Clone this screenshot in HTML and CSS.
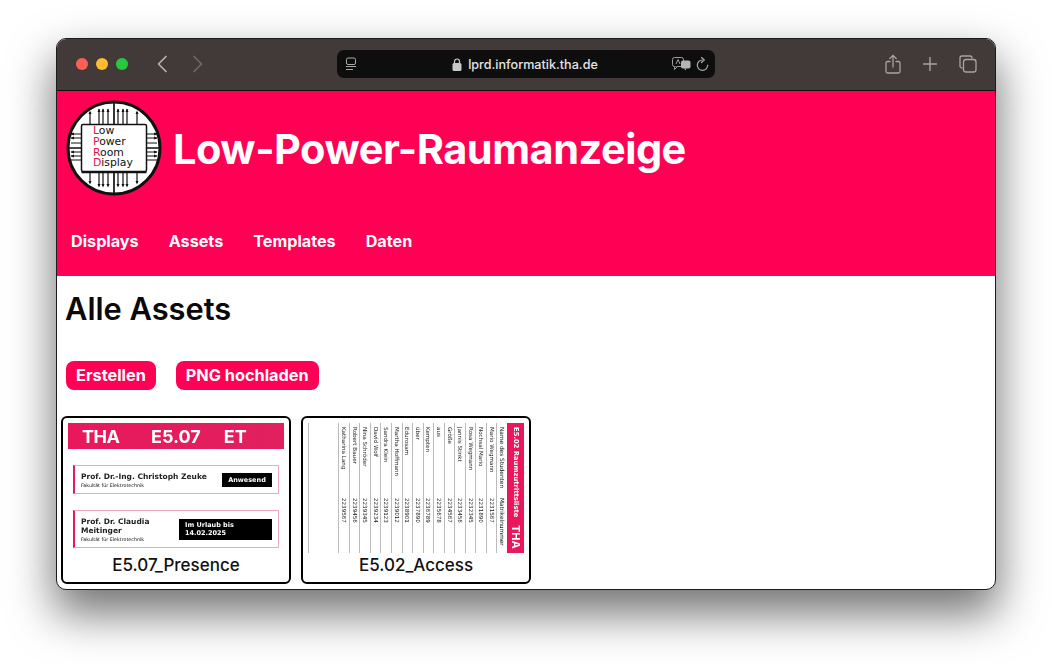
FILE: index.html
```html
<!DOCTYPE html>
<html>
<head>
  <title>Low-Power-Raumanzeige</title>
  <link rel="stylesheet" href="styles.css">
</head>
<body>
<div class="window">
  <div class="toolbar">
    <div class="lights">
      <span class="light red"></span>
      <span class="light yellow"></span>
      <span class="light green"></span>
    </div>
    <div class="arrows">
      <svg width="12" height="18" viewBox="0 0 12 18"><path d="M10 1.5 2.5 9l7.500 7.500" fill="none" stroke="#b5b1b0" stroke-width="1.700" stroke-linecap="round" stroke-linejoin="round"/></svg>
      <svg width="12" height="18" viewBox="0 0 12 18"><path d="M2 1.500 9.500 9 2 16.500" fill="none" stroke="#6e6867" stroke-width="1.700" stroke-linecap="round" stroke-linejoin="round"/></svg>
    </div>
    <div class="urlbar">
      <svg class="reader" width="13" height="14" viewBox="0 0 13 14"><rect x="1.500" y="1" width="9" height="6.500" rx="1.500" fill="none" stroke="#a9a9a9" stroke-width="1"/><path d="M1 9.500h10M1 12.500h7" stroke="#a9a9a9" stroke-width="1"/></svg>
      <div class="address">
        <svg width="10" height="13" viewBox="0 0 10 13"><rect x="0.500" y="5" width="9" height="8" rx="1.500" fill="#c8c8c8"/><path d="M2.500 5.500V3.500a2.500 2.500 0 0 1 5 0v2" fill="none" stroke="#c8c8c8" stroke-width="1.200"/></svg>
        <span>lprd.informatik.tha.de</span>
      </div>
      <svg class="translate" width="19" height="14" viewBox="0 0 19 14"><rect x="0.500" y="0.500" width="11" height="9" rx="2" fill="#0e0e0e" stroke="#a0a0a0"/><path d="M2.500 9.500v3l3-3" fill="#0e0e0e" stroke="#a0a0a0"/><rect x="9" y="3.500" width="9.500" height="8" rx="2" fill="#b5b5b5"/><path d="M14 11.500v2l-2-2" fill="#b5b5b5"/><path d="M4 7l2-4.500L8 7" fill="none" stroke="#a0a0a0"/></svg>
      <svg width="13" height="15" viewBox="0 0 13 15"><path d="M6.500 3a5.200 5.200 0 1 0 5.200 5.200" fill="none" stroke="#a9a9a9" stroke-width="1.200" stroke-linecap="round"/><path d="M5.500 0.500 8.300 3 5.500 5.500" fill="none" stroke="#a9a9a9" stroke-width="1.200" stroke-linecap="round"/></svg>
    </div>
    <div class="actions">
      <svg width="16" height="20" viewBox="0 0 16 20"><path d="M5 7.500H2.500a1.500 1.500 0 0 0-1.500 1.500v8.500a1.500 1.500 0 0 0 1.500 1.500h11a1.500 1.500 0 0 0 1.500-1.500V9a1.500 1.500 0 0 0-1.500-1.500H11M8 13V1.500M4.800 4.500 8 1.300l3.200 3.200" fill="none" stroke="#a8a4a3" stroke-width="1.300" stroke-linecap="round"/></svg>
      <svg width="14" height="14" viewBox="0 0 14 14"><path d="M7 .5v13M.5 7h13" stroke="#a8a4a3" stroke-width="1.400" stroke-linecap="round"/></svg>
      <svg width="18" height="18" viewBox="0 0 18 18"><path d="M3.500 13H3a2 2 0 0 1-2-2V3a2 2 0 0 1 2-2h8a2 2 0 0 1 2 2v.500" fill="none" stroke="#a8a4a3" stroke-width="1.300"/><rect x="4.500" y="4.500" width="12.500" height="12.500" rx="2.500" fill="none" stroke="#a8a4a3" stroke-width="1.300"/></svg>
    </div>
  </div>

  <header class="hero">
    <div class="brand">
      <svg class="logo" width="96" height="96" viewBox="0 0 96 96">
        <circle cx="48" cy="48" r="46" fill="#fff" stroke="#111" stroke-width="3"/>
        <path d="M48 2v22M48 72v22M2 48h14M80 48h14" stroke="#111" stroke-width="1.700"/>
        <path d="M24 24V12M33 24V9M37 24V9M42 24V9M52 24V9M57 24V9M61 24V9M71 24V12" stroke="#111" stroke-width="1.200"/>
        <path d="M22.500 14 24 10.500 25.500 14zM31.500 12 33 8.500 34.500 12zM35.500 12 37 8.500 38.500 12zM40.500 12 42 8.500 43.500 12zM50.500 12 52 8.500 53.500 12zM55.500 12 57 8.500 58.500 12zM59.500 12 61 8.500 62.500 12zM69.500 14 71 10.500 72.500 14z" fill="#111"/>
        <path d="M24 72v11M33 72v14M37 72v14M42 72v14M52 72v14M57 72v14M61 72v14M71 72v11" stroke="#111" stroke-width="1.200"/>
        <path d="M22.500 81 24 84.500 25.500 81zM31.500 84 33 87.500 34.500 84zM35.500 84 37 87.500 38.500 84zM40.500 84 42 87.500 43.500 84zM50.500 84 52 87.500 53.500 84zM55.500 84 57 87.500 58.500 84zM59.500 84 61 87.500 62.500 84zM69.500 81 71 84.500 72.500 81z" fill="#111"/>
        <path d="M5 34h11M5 38h11M5 43h11M5 52h11M5 56h11M5 60h11M80 34h11M80 38h11M80 43h11M80 52h11M80 56h11M80 60h11" stroke="#111" stroke-width="1.200"/>
        <path d="M8 32.500 4.500 34 8 35.500zM8 36.500 4.500 38 8 39.500zM8 50.500 4.500 52 8 53.500zM8 54.500 4.500 56 8 57.500zM88 32.500 91.500 34 88 35.500zM88 36.500 91.500 38 88 39.500zM88 50.500 91.500 52 88 53.500zM88 54.500 91.500 56 88 57.500z" fill="#111"/>
        <rect x="15.500" y="24.500" width="65" height="47" rx="1.500" fill="#fff" stroke="#111" stroke-width="1.500"/>
        <path d="M15.500 72.500h65" stroke="#111" stroke-width="1.500"/>
        <g class="logo-text">
          <text x="27" y="34"><tspan class="logo-red">L</tspan>ow</text>
          <text x="27" y="45"><tspan class="logo-red">P</tspan>ower</text>
          <text x="27" y="55.500"><tspan class="logo-red">R</tspan>oom</text>
          <text x="27" y="66"><tspan class="logo-red">D</tspan>isplay</text>
        </g>
      </svg>
      <h1 class="site-title">Low-Power-Raumanzeige</h1>
    </div>
    <nav class="nav">
      <a href="#">Displays</a>
      <a href="#">Assets</a>
      <a href="#">Templates</a>
      <a href="#">Daten</a>
    </nav>
  </header>

  <main class="content">
    <h2 class="page-title">Alle Assets</h2>
    <div class="buttons">
      <a class="btn" href="#">Erstellen</a>
      <a class="btn" href="#">PNG hochladen</a>
    </div>
    <div class="assets">
      <div class="card">
        <div class="thumb">
          <div class="door-band">
            <span class="door-logo">THA</span>
            <span>E5.07</span>
            <span>ET</span>
          </div>
          <div class="person">
            <div class="person-text">
              <div class="person-name">Prof. Dr.-Ing. Christoph Zeuke</div>
              <div class="person-dept">Fakultät für Elektrotechnik</div>
            </div>
            <div class="status status-short">Anwesend</div>
          </div>
          <div class="person person-tall">
            <div class="person-text">
              <div class="person-name">Prof. Dr. Claudia Meitinger</div>
              <div class="person-dept">Fakultät für Elektrotechnik</div>
            </div>
            <div class="status status-long">Im Urlaub bis 14.02.2025</div>
          </div>
        </div>
        <div class="card-name">E5.07_Presence</div>
      </div>

      <div class="card">
        <div class="thumb">
          <div class="list">
            <div class="list-band">
              <span>E5.02 Raumzutrittsliste</span>
              <span class="list-logo">THA</span>
            </div>
            <div class="list-row list-head"><span>Name des Studenten</span><span>Matrikelnummer</span></div>
            <div class="list-row"><span>Mario Wegmann</span><span>2231567</span></div>
            <div class="list-row"><span>Nochsal Mario</span><span>2231890</span></div>
            <div class="list-row"><span>Rosa Wegmann</span><span>2232345</span></div>
            <div class="list-row"><span>Jannis Stinkt</span><span>2233456</span></div>
            <div class="list-row"><span>Größe</span><span>2234567</span></div>
            <div class="list-row"><span>aus</span><span>2235678</span></div>
            <div class="list-row"><span>Kempten</span><span>2236789</span></div>
            <div class="list-row"><span>über</span><span>2237890</span></div>
            <div class="list-row"><span>Edurosam</span><span>2238901</span></div>
            <div class="list-row"><span>Martha Hoffmann</span><span>2239012</span></div>
            <div class="list-row"><span>Sandra Klein</span><span>2239123</span></div>
            <div class="list-row"><span>David Wolf</span><span>2239234</span></div>
            <div class="list-row"><span>Nina Schröder</span><span>2239345</span></div>
            <div class="list-row"><span>Robert Bauer</span><span>2239456</span></div>
            <div class="list-row"><span>Katharina Lang</span><span>2239567</span></div>
            <div class="list-row list-empty"></div>
          </div>
        </div>
        <div class="card-name">E5.02_Access</div>
      </div>
    </div>
  </main>
</div>
</body>
</html>
```

FILE: styles.css
```css
html, body {
  margin: 0;
  height: 664px;
  overflow: hidden;
  background: #fff;
}
body {
  padding: 38px 56px 0;
  box-sizing: border-box;
  font-family: Inter, "Liberation Sans", sans-serif;
}

.window {
  width: 940px;
  height: 552px;
  box-sizing: border-box;
  border: 1px solid #1c1c1c;
  border-radius: 10px;
  overflow: hidden;
  background: #fff;
  box-shadow: 0 22px 45px 2px rgba(0, 0, 0, .55);
}

/* browser chrome */
.toolbar {
  height: 52px;
  box-sizing: border-box;
  border-bottom: 1px solid #111;
  background: #423a39;
  display: flex;
  align-items: center;
  padding: 0 0 1px 19px;
}
.lights {
  display: flex;
  gap: 8px;
}
.light {
  width: 12px;
  height: 12px;
  border-radius: 50%;
}
.red { background: #ff5f57; }
.yellow { background: #febc2e; }
.green { background: #28c840; }
.arrows {
  display: flex;
  gap: 24px;
  margin-left: 28px;
}
.urlbar {
  width: 378px;
  height: 28px;
  margin-left: 133px;
  box-sizing: border-box;
  padding: 0 6px 0 8px;
  background: #0e0e0e;
  border-radius: 7px;
  display: flex;
  align-items: center;
}
.address {
  flex: 1;
  display: flex;
  justify-content: center;
  align-items: center;
  gap: 6px;
  margin-left: 20px;
  color: #e4e4e4;
  font-size: 12.600px;
  font-weight: 500;
}
.translate {
  margin-right: 5px;
}
.actions {
  display: flex;
  align-items: center;
  gap: 22px;
  margin-left: 170px;
}

/* header */
.hero {
  height: 185px;
  box-sizing: border-box;
  background: #ff0055;
  padding: 9px 9px 0;
}
.brand {
  display: flex;
  align-items: center;
  gap: 11px;
}
.logo {
  flex: none;
}
.logo-text {
  font-family: "DejaVu Sans", sans-serif;
  font-size: 10.800px;
  fill: #111;
}
.logo-red {
  fill: #e0144f;
}
.site-title {
  margin: 0;
  padding-top: 2px;
  color: #fff;
  font-size: 41.500px;
  font-weight: 700;
  letter-spacing: -.5px;
}
.nav {
  display: flex;
  gap: 30px;
  margin-top: 35px;
  padding-left: 5px;
}
.nav a {
  color: #fff;
  font-size: 16.200px;
  font-weight: 700;
  text-decoration: none;
}

/* content */
.content {
  padding: 0 4px;
}
.page-title {
  margin: 14px 0 0 4px;
  font-size: 30.800px;
  font-weight: 600;
  color: #0a0a0a;
}
.buttons {
  display: flex;
  gap: 20px;
  margin: 34px 0 0 5px;
}
.btn {
  display: block;
  height: 29px;
  line-height: 29px;
  padding: 0 10px;
  border-radius: 8px;
  background: #ff0055;
  color: #fff;
  font-size: 16.300px;
  font-weight: 700;
  text-decoration: none;
}
.assets {
  display: flex;
  gap: 10px;
  margin-top: 26px;
}
.card {
  width: 230px;
  height: 168px;
  box-sizing: border-box;
  border: 2px solid #000;
  border-radius: 6px;
  padding: 5px;
}
.card-name {
  text-align: center;
  font-size: 17px;
  font-weight: 500;
  color: #111;
  margin-top: 2px;
}
.thumb {
  height: 130px;
  overflow: hidden;
  filter: blur(.3px);
  font-family: "DejaVu Sans", sans-serif;
  color: #222;
}

/* door sign thumbnail */
.door-band {
  height: 26px;
  background: linear-gradient(90deg, #e9185c, #e0205f);
  color: #fff;
  display: flex;
  align-items: center;
  padding-left: 14px;
  font-family: Inter, sans-serif;
  font-size: 18px;
  font-weight: 700;
}
.door-logo {
  width: 69px;
  font-size: 18px;
  letter-spacing: -.5px;
}
.door-band span:last-child {
  margin-left: 23px;
}
.person {
  height: 29px;
  box-sizing: border-box;
  margin: 16px 5px 0;
  border: 1px solid #f2a7c0;
  border-left: 2px solid #e9185c;
  display: flex;
  align-items: center;
  justify-content: space-between;
  padding: 0 6px 0 6px;
}
.person-tall {
  height: 38px;
}
.person-name {
  font-size: 7.500px;
  font-weight: 700;
  line-height: 9px;
}
.person-dept {
  font-size: 4.800px;
  margin-top: 2px;
  color: #111;
}
.person-tall .person-text {
  width: 96px;
}
.status {
  background: #000;
  color: #fff;
  font-size: 6.500px;
  font-weight: 700;
  line-height: 8px;
  box-sizing: border-box;
  display: flex;
  align-items: center;
}
.status-short {
  width: 50px;
  height: 14px;
  justify-content: center;
}
.status-long {
  width: 93px;
  height: 21px;
  padding: 0 24px 0 6px;
}

/* room list thumbnail, rows turned on their side */
.list {
  display: flex;
  flex-direction: row-reverse;
  height: 130px;
}
.list-band {
  width: 17px;
  flex: none;
  writing-mode: vertical-rl;
  background: #e9185c;
  color: #fff;
  font-size: 6.800px;
  font-weight: 700;
  white-space: nowrap;
  display: flex;
  justify-content: space-between;
  align-items: center;
  padding: 4px 0;
  box-sizing: border-box;
}
.list-logo {
  font-family: Inter, sans-serif;
  font-size: 11px;
}
.list-row {
  width: 10.550px;
  flex: none;
  writing-mode: vertical-rl;
  box-sizing: border-box;
  border-left: 1px solid #bbb;
  display: flex;
  align-items: center;
  padding-top: 4px;
  font-size: 5.600px;
  white-space: nowrap;
}
.list-row span:first-child {
  flex: none;
  height: 71px;
}
.list-head {
  font-size: 5.800px;
  color: #111;
}
.list-empty {
  width: 30px;
}
```
